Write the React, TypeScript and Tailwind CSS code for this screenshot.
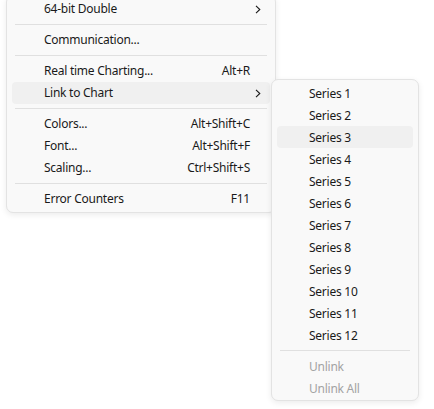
import { ReactNode } from "react";

type Item = { label: string; shortcut?: string; sub?: boolean; hover?: boolean; disabled?: boolean } | "sep";

const mainItems: Item[] = [
  { label: "64-bit Double", sub: true },
  "sep",
  { label: "Communication..." },
  "sep",
  { label: "Real time Charting...", shortcut: "Alt+R" },
  { label: "Link to Chart", sub: true, hover: true },
  "sep",
  { label: "Colors...", shortcut: "Alt+Shift+C" },
  { label: "Font...", shortcut: "Alt+Shift+F" },
  { label: "Scaling...", shortcut: "Ctrl+Shift+S" },
  "sep",
  { label: "Error Counters", shortcut: "F11" },
];

const seriesItems: Item[] = [
  ...Array.from({ length: 12 }, (_, i) => ({ label: `Series ${i + 1}`, hover: i === 2 })),
  "sep",
  { label: "Unlink", disabled: true },
  { label: "Unlink All", disabled: true },
];

const Chevron = () => (
  <svg width="6" height="9" viewBox="0 0 6 9" fill="none">
    <path d="M1 0.8 L4.8 4.5 L1 8.2" stroke="#1a1a1a" strokeWidth="1.1" />
  </svg>
);

const Separator = () => <div className="mx-[3px] my-[4px] h-px bg-[#e0e0e0]" />;

const MenuRow = ({ item, showArrowCol, lower }: { item: Exclude<Item, "sep">; showArrowCol: boolean; lower: boolean }) => (
  <div
    className={`flex h-[22px] items-center rounded-[4px] pl-[32px] leading-[22px] ${
      item.hover ? "bg-[#f0f0f0]" : ""
    } ${item.disabled ? "text-[#a3a3a3]" : "text-[#1a1a1a]"}`}
  >
    <span className={`flex-1 whitespace-nowrap ${lower ? "pt-[2px]" : ""}`}>{item.label}</span>
    {item.shortcut && <span className="whitespace-nowrap">{item.shortcut}</span>}
    {showArrowCol && (
      <span className="flex w-[20px] items-center pl-[5px]">{item.sub ? <Chevron /> : null}</span>
    )}
  </div>
);

const Menu = ({
  items,
  className,
  arrows,
  lower = false,
}: {
  items: Item[];
  className: string;
  arrows: boolean;
  lower?: boolean;
}): ReactNode => (
  <div
    className={`rounded-[7px] border border-[#e3e3e3] bg-[#f9f9f9] px-[5px] shadow-[0_2px_6px_rgba(0,0,0,0.08)] ${className}`}
  >
    {items.map((item, i) =>
      item === "sep" ? (
        <Separator key={i} />
      ) : (
        <MenuRow key={i} item={item} showArrowCol={arrows} lower={lower} />
      )
    )}
  </div>
);

export default function App() {
  return (
    <div
      className="relative h-[409px] w-[434px] overflow-hidden bg-white text-[12px] tracking-[-0.25px]"
      style={{ fontFamily: '"Noto Sans", "Open Sans", sans-serif' }}
    >
      <Menu items={mainItems} arrows className="ml-[6px] mt-[-5px] w-[270px] pb-[2px] pt-[2px]" />
      {/* submenu popup for "Link to Chart" */}
      <Menu
        items={seriesItems}
        arrows={false}
        lower
        className="absolute left-[271px] top-[79px] w-[148px] pb-[1px] pt-[2px]"
      />
    </div>
  );
}
